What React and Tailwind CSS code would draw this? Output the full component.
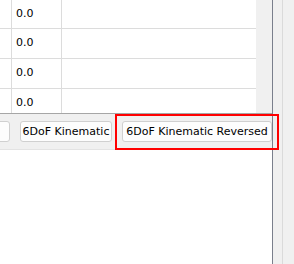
import React from "react";

const rows = ["0.0", "0.0", "0.0", "0.0"];

const App = () => {
  return (
    <div
      className="relative w-[294px] h-[264px] flex overflow-hidden bg-[#f0f0f0] text-[11px] text-black"
      style={{ fontFamily: '"DejaVu Sans", sans-serif' }}
    >
      {/* main panel */}
      <div className="w-[273px] h-full flex flex-col bg-white border-r border-[#7a7f8c]">
        <div className="h-[113px] flex">
          <div className="w-[256px] h-full overflow-hidden bg-white">
            {rows.map((v, i) => (
              <div
                key={i}
                className={`flex border-b border-[#dcdcdc] ${i === 0 ? "h-[29px]" : "h-[30px]"}`}
              >
                <div className="w-[12px] border-r border-[#dcdcdc]" />
                <div className="w-[50px] border-r border-[#dcdcdc] flex items-center pl-[4px]">
                  {v}
                </div>
                <div className="flex-1" />
              </div>
            ))}
          </div>
          <div className="flex-1 bg-[#f0f0f0]" />
        </div>

        <div className="h-[37px] flex items-center gap-[10px] bg-[#f0f0f0] border-t border-[#a6a6a6] border-b border-b-[#e3e3e3]">
          <button className="w-[60px] h-[21px] ml-[-50px] rounded-[3px] border border-[#d0d0d0] bg-[#fdfdfd]" />
          <button className="w-[92px] h-[21px] rounded-[3px] border border-[#d0d0d0] bg-[#fdfdfd] whitespace-nowrap leading-none">
            6DoF Kinematic
          </button>
          <button className="w-[150px] h-[21px] rounded-[3px] border border-[#d0d0d0] bg-[#fdfdfd] whitespace-nowrap leading-none">
            6DoF Kinematic Reversed
          </button>
        </div>

        <div className="flex-1 bg-white" />
      </div>

      {/* side strip */}
      <div className="w-[10px] h-full border-r border-[#dadada]" />
      <div className="flex-1" />

      {/* highlight annotation */}
      <div className="absolute left-[115px] top-[114px] w-[164px] h-[36px] border-2 border-[#ff0000]" />
    </div>
  );
};

export default App;
